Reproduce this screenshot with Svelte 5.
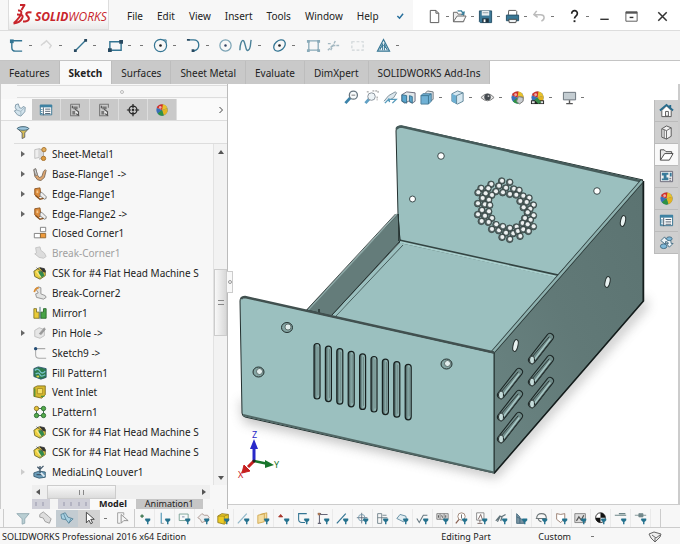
<script>
	const menus = ['File', 'Edit', 'View', 'Insert', 'Tools', 'Window', 'Help'];

	const quick = [
		{ icon: 'new', label: 'New', drop: true },
		{ icon: 'open', label: 'Open', drop: true },
		{ icon: 'save', label: 'Save', drop: true },
		{ icon: 'print', label: 'Print', drop: true },
		{ icon: 'undo', label: 'Undo', drop: true },
		{ icon: 'help', label: 'Help', drop: true },
		{ icon: 'minimize', label: 'Minimize' },
		{ icon: 'restore', label: 'Restore' },
		{ icon: 'close', label: 'Close' }
	];

	const sketchTools = [
		{ icon: 'sketch', label: 'Sketch', drop: true },
		{ icon: 'dimension', label: 'Smart Dimension', drop: true },
		{ icon: 'line', label: 'Line', drop: true },
		{ icon: 'rect', label: 'Corner Rectangle', drop: true, extra: true },
		{ icon: 'circle', label: 'Circle', drop: true },
		{ icon: 'arc', label: 'Arc', drop: true },
		{ icon: 'circle3', label: 'Perimeter Circle' },
		{ icon: 'spline', label: 'Spline', drop: true },
		{ icon: 'ellipse', label: 'Ellipse', drop: true },
		{ icon: 'convert', label: 'Convert Entities' },
		{ icon: 'trim', label: 'Trim Entities' },
		{ icon: 'offset', label: 'Offset Entities' },
		{ icon: 'mirrorTool', label: 'Mirror Entities', drop: true }
	];

	const tabs = ['Features', 'Sketch', 'Surfaces', 'Sheet Metal', 'Evaluate', 'DimXpert', 'SOLIDWORKS Add-Ins'];

	const panelTabs = [
		{ icon: 'part', label: 'FeatureManager' },
		{ icon: 'props', label: 'PropertyManager' },
		{ icon: 'config', label: 'ConfigurationManager' },
		{ icon: 'config', label: 'Display States' },
		{ icon: 'target', label: 'DimXpertManager' },
		{ icon: 'ball', label: 'DisplayManager' }
	];

	const tree = [
		{ name: 'Sheet-Metal1', icon: 'sheetMetal', open: true },
		{ name: 'Base-Flange1 ->', icon: 'baseFlange', open: true },
		{ name: 'Edge-Flange1', icon: 'edgeFlange', open: true },
		{ name: 'Edge-Flange2 ->', icon: 'edgeFlange', open: true },
		{ name: 'Closed Corner1', icon: 'closedCorner' },
		{ name: 'Break-Corner1', icon: 'suppressed', off: true },
		{ name: 'CSK for #4 Flat Head Machine S', icon: 'csk' },
		{ name: 'Break-Corner2', icon: 'breakCorner' },
		{ name: 'Mirror1', icon: 'mirror' },
		{ name: 'Pin Hole ->', icon: 'hole', open: true },
		{ name: 'Sketch9 ->', icon: 'sketchItem' },
		{ name: 'Fill Pattern1', icon: 'fill' },
		{ name: 'Vent Inlet', icon: 'vent' },
		{ name: 'LPattern1', icon: 'lpattern' },
		{ name: 'CSK for #4 Flat Head Machine S', icon: 'csk' },
		{ name: 'CSK for #4 Flat Head Machine S', icon: 'csk' },
		{ name: 'MediaLinQ Louver1', icon: 'louver', open: true, faint: true }
	];

	const viewTools = [
		{ icon: 'zoomFit', label: 'Zoom to Fit' },
		{ icon: 'zoomArea', label: 'Zoom to Area' },
		{ icon: 'prevView', label: 'Previous View' },
		{ icon: 'section', label: 'Section View' },
		{ icon: 'orient', label: 'View Orientation', drop: true },
		{ icon: 'cube', label: 'Display Style', drop: true },
		{ icon: 'eye', label: 'Hide/Show Items', drop: true },
		{ icon: 'appearance', label: 'Edit Appearance' },
		{ icon: 'scene', label: 'Apply Scene', drop: true },
		{ icon: 'monitor', label: 'View Settings', drop: true }
	];

	const taskTabs = [
		{ icon: 'home', label: 'Resources' },
		{ icon: 'library', label: 'Design Library' },
		{ icon: 'folder', label: 'File Explorer' },
		{ icon: 'palette', label: 'View Palette' },
		{ icon: 'ball', label: 'Appearances' },
		{ icon: 'props', label: 'Custom Properties' },
		{ icon: 'forum', label: 'Forum' }
	];

	const filters = [
		'fVertex', 'fEdge', 'fFace', 'fSurface', 'fSolid', 'fAxis', 'fPlane', 'fPoint', 'fSketch',
		'fSegment', 'fLine', 'fCenter', 'fDim', 'fNote', 'fFinish', 'fBox', 'fBalloon', 'fDatum',
		'fWeld', 'fBlock', 'fCosmetic', 'fShield', 'fPicture', 'fMass', 'fRoute', 'fPipe'
	];

	// Vent perforations, drawn at a third of this scale
	const perforations = [
		[110, 33], [134, 37], [78, 43], [101, 48], [48, 55], [122, 54], [69, 56], [146, 57], [162, 61],
		[92, 65], [39, 68], [61, 71], [113, 68], [134, 73], [80, 76], [153, 75], [174, 78], [192, 84],
		[52, 85], [71, 90], [165, 94], [184, 97], [38, 101], [59, 104], [74, 106], [205, 105], [175, 113],
		[195, 117], [50, 121], [71, 125], [187, 128], [38, 134], [59, 138], [80, 145], [205, 137],
		[179, 145], [196, 150], [49, 154], [70, 157], [93, 164], [172, 160], [187, 164], [80, 178],
		[101, 182], [113, 170], [134, 175], [154, 171], [205, 170], [122, 189], [144, 191], [158, 184],
		[174, 179], [190, 184], [165, 199], [111, 202], [134, 208]
	];

	const slots = Array.from({ length: 9 }, (_, i) => ({ x: 314 + i * 11.4, y: 343.5 + i * 2.6 }));
	const louvers = [[501, 395], [501, 417], [501, 439], [532, 360], [532, 382], [532, 404]];

	const T = '<path d="M9 9h6M9 9l2.200 2.500M15 9l-2.200 2.500M12 9v6" stroke="#23718d" stroke-width="1.700"/>';
	const ball = '<circle cx="8" cy="8" r="6.500" fill="#3b6fb8"/><path d="M8 8L2 5.500A6.500 6.500 0 0 1 8 1.500z" fill="#dfe6ee"/><path d="M8 8L8 1.500A6.500 6.500 0 0 1 14.200 6z" fill="#e8c12c"/><path d="M8 8L2 5.500A6.500 6.500 0 0 1 9 1.600z" fill="#cf2e28"/><path d="M8 8l6.200-2A6.500 6.500 0 0 1 10 14.200z" fill="#e2b322"/><path d="M8 8l2 6.200A6.500 6.500 0 0 1 3 12z" fill="#2e9243"/><circle cx="6" cy="5" r="1.500" fill="#fff" opacity=".6"/>';
	const cubeBlue = '<path d="M2 4l6-3 6 2v9l-6 3-6-3z" fill="#d5e7f0" stroke="#5f8498"/><path d="M2 4l5 2v9l-5-3z" fill="#6db0d3"/><path d="M7 6l7-3M7 6v9" stroke="#5f8498"/>';

	const icons = {
		new: '<path d="M3.500 1.500h6l3 3v10h-9z" fill="#fff" stroke="#555"/><path d="M9.500 1.500v3h3" stroke="#555"/>',
		open: '<path d="M1.500 13.500v-10h4l1 2h6v8z" fill="#ececec" stroke="#666"/><path d="M1.500 13.500l4-6h9.500l-3 6z" fill="#f8f8f8" stroke="#666"/><path d="M6 2h4l2 3M10 6l2.500-.5.5-3" stroke="#397f9b" stroke-width="1.500"/>',
		save: '<path d="M1.500 2h13v12.500h-12l-1-1z" fill="#3c7897" stroke="#244f66"/><path d="M4 2h8v5H4z" fill="#e9eef1"/><path d="M4.500 10h7v4.500h-7z" fill="#20323d"/><path d="M6 11h2v3H6z" fill="#fff"/><path d="M5 4h6" stroke="#8c9aa2"/>',
		print: '<path d="M4 1.500h7.500l1 1V7h-9z" fill="#fff" stroke="#555"/><path d="M1.500 6.500h13v6h-13z" fill="#397895" stroke="#244f66"/><path d="M4 11h8.500l-1 3.500h-7z" fill="#eef2f4" stroke="#444"/>',
		undo: '<path d="M5 2L2 6l4 3M2.500 6H9c5 0 5 5 1 7" stroke="#bcbcbc" stroke-width="1.600"/>',
		help: '<path d="M5 5c0-4.500 6.500-4 6 0 0 2.500-3 2.500-3 5" stroke="#222" stroke-width="1.800"/><path d="M7 12h2v2H7z" fill="#222"/>',
		minimize: '<path d="M3.500 11h9" stroke="#333" stroke-width="1.500"/>',
		restore: '<path d="M2 3h12v10H2z" fill="#fff" stroke="#555"/><path d="M2 4h12" stroke="#555" stroke-width="2"/><path d="M6 9h4" stroke="#333" stroke-width="1.500"/>',
		close: '<path d="M3.500 3.500l9 9m0-9l-9 9" stroke="#333" stroke-width="1.600"/>',
		check: '<path d="M5 8l2.500 2.500 4-5" stroke="#276f9c" stroke-width="1.700"/>',

		sketch: '<path d="M3 3h11M3 3v7q0 4 4 4h7" stroke="#347593" stroke-width="1.500"/><path d="M1 1.500h4v4H1z" fill="#347593"/>',
		dimension: '<path d="M2 8l6-5 5 5-2 3M8 3L5 6" stroke="#d5d5d5" stroke-width="1.500"/>',
		line: '<path d="M3 13L13 3" stroke="#347593" stroke-width="1.400"/><path d="M1 12h3v3H1zM12 1h3v3h-3z" fill="#284960"/>',
		rect: '<path d="M2 4h12v9H2z" stroke="#347593" stroke-width="1.500"/><path d="M0 11h4v4H0zM12 2h4v4h-4z" fill="#284960"/>',
		circle: '<circle cx="8" cy="8" r="6.500" stroke="#347593" stroke-width="1.300"/><circle cx="8" cy="8" r="1.400" fill="#222"/><path d="M11 2h3v3" stroke="#347593"/>',
		arc: '<path d="M3 2h5c7 0 8 10 0 12" stroke="#347593" stroke-width="1.400"/><path d="M1 1h3v2H1zM6 12h3v3H6z" fill="#284960"/>',
		circle3: '<circle cx="8" cy="8" r="6" stroke="#7ba3b5" stroke-width="1.300"/><circle cx="8" cy="8" r="1.300" fill="#346"/>',
		spline: '<path d="M2 13C2 7 4 1 6 3s2 12 5 10 2-7 3-11" stroke="#4a8098" stroke-width="1.500"/>',
		ellipse: '<ellipse cx="8" cy="8" rx="7" ry="5" transform="rotate(-42 8 8)" stroke="#347593" stroke-width="1.400"/><circle cx="8" cy="8" r="1.400" fill="#222"/>',
		convert: '<path d="M3 3h10v10H3z" stroke="#8aabb9" stroke-width="1.400"/><path d="M1 2h3v3H1zM12 2h3v3h-3zM1 12h3v3H1zM12 12h3v3h-3z" fill="#8aabb9"/>',
		trim: '<path d="M2 13l5-5M5 13l5-10M7 8h7M2 6h4" stroke="#a4b8c1" stroke-width="1.500" stroke-dasharray="3 1"/>',
		offset: '<path d="M2 4h12v9H2z" stroke="#cfd5d8" stroke-width="1.300" stroke-dasharray="3 2"/>',
		mirrorTool: '<path d="M8 1.500L1.500 14h13z" fill="#eaf3f7" stroke="#347593" stroke-width="1.200"/><path d="M4 13l3-7v7M12 13L9 6v7M4 11l4-3 4 4" stroke="#347593"/>',

		part: '<path d="M3 2l3-1 1.500 4.500L10 6l1.500-2L14 5l-.5 5-4.500 5L5 13.500 1.500 9 4 8 2.500 5z" fill="#d3e4ed" stroke="#7b95a5"/><path d="M4 8l5 1.500 4-4M9 9.500v5" stroke="#9bb2bf"/>',
		props: '<path d="M1.500 2.500h13v11h-13z" fill="#fff" stroke="#316f8e"/><path d="M1 2h14v3H1z" fill="#3e82a3"/><path d="M5 5v9M7 7h6M7 9.500h6M7 12h6" stroke="#456"/><path d="M3 7v1M3 9v1M3 11.500v1" stroke="#3e82a3" stroke-width="2"/>',
		config: '<path d="M3 1.500h10v4M3 1.500v13h10" stroke="#777" stroke-width="1.200"/><path d="M6 4h5v3H6zM5 9h3v4H5z" fill="#777"/><path d="M8 7l4 3v4l-3-2M5 3v3" stroke="#555" stroke-width="1.300"/><path d="M9 10l2 2" stroke="#eee" stroke-width="1.500"/>',
		target: '<circle cx="8" cy="8" r="4.500" stroke="#222" stroke-width="1.400"/><path d="M8 1v5M8 10v5M1 8h5M10 8h5" stroke="#222" stroke-width="1.400"/><circle cx="8" cy="8" r="1.300" fill="#222"/>',
		ball,
		funnel: '<path d="M1.500 4q6.500-4 13 0L10 9v5l-3 1.500V9z" fill="#d8bd54" stroke="#5e6066"/><ellipse cx="8" cy="4" rx="6.500" ry="2" fill="#9fc7de" stroke="#44697d"/>',

		sheetMetal: '<path d="M2 3l5-1v10l-5 1z" fill="#eee" stroke="#bbb"/><path d="M7 2l5 2v8l-5 2" fill="#d9d9d9" stroke="#aaa"/><circle cx="12.500" cy="3" r="2.500" fill="#e1ad5c" stroke="#a46e28"/><circle cx="12" cy="13" r="2.500" fill="#dd9b3d" stroke="#a46e28"/>',
		baseFlange: '<path d="M1 3l2-1 2 7 2 3 3-1 2-6 2-2 1 1-2 8-4 3.500-4-1-3-4z" fill="#dda56f" stroke="#7b6957"/><path d="M1 3l2-1 2 7-2 1z" fill="#ddd" stroke="#777"/>',
		edgeFlange: '<path d="M2 2l6-1 1 9-3 2-4-3z" fill="#dc8c3c" stroke="#88501c"/><path d="M8 7l2-1 5 5v2l-2 1-5-4z" fill="#eee" stroke="#777"/><path d="M3 10l5 4 4-1" stroke="#88501c" stroke-width="1.500"/><path d="M4 4h2v3H4z" fill="#f4c58b"/>',
		closedCorner: '<path d="M8.500 1.500h6v5h-6zM1.500 8.500h7v5h-7z" fill="#fff" stroke="#777"/><path d="M8.500 8.500h6v5h-6z" fill="#ef9b3d" stroke="#90632c"/>',
		suppressed: '<path d="M3 2l5-1 1 4 4 3 2 4-3 2-5-1-5-4 2-1z" fill="#dcdcdc" stroke="#c1c1c1"/>',
		breakCorner: '<path d="M3 3l3-2 3 1v7l5 2 1 2-3 2-8-2-1-4 3-1z" fill="#e2e3e2" stroke="#8e8e8e"/><path d="M1.500 7q1-5 5-5" stroke="#d98d35" stroke-width="2"/>',
		csk: '<path d="M1 6l6-4 7 3v6l-6 4-6-3z" fill="#edcf3e" stroke="#66642b"/><path d="M6 6l5 0 2 5-5 3z" fill="#318a4d"/><path d="M4 6l5 7" stroke="#f8e88b" stroke-width="1.500"/><path d="M8 2l5 1 1 4-3-1z" fill="#333" stroke="#333"/><path d="M4 2l8 6" stroke="#555"/>',
		mirror: '<path d="M1 3h3v4h3v7H1z" fill="#eacb37" stroke="#7f762d"/><path d="M15 3h-3v4H9v7h6z" fill="#48a447" stroke="#28672b"/><path d="M8 1v14" stroke="#396675"/>',
		hole: '<path d="M2 5l5-3 6 2v7l-5 3-6-2z" fill="#e6e6e6" stroke="#bcbcbc"/><path d="M7 9l6-7 1 2-5 6" fill="#999" stroke="#999"/>',
		sketchItem: '<path d="M3 3h11M3 3v7q0 4 4 4h8" stroke="#aaa" stroke-width="1.200"/><circle cx="3" cy="3" r="1.900" fill="#244d75"/>',
		fill: '<path d="M1 3l5-2 9 2v10l-6 2-8-3z" fill="#2d7b4c" stroke="#28536d"/><path d="M2 5q4-3 6 1t6 0M3 9q4-2 5 1t6 0" stroke="#79c2cc" stroke-width="1.500"/><path d="M4 12h3" stroke="#e1d34a" stroke-width="2"/>',
		vent: '<path d="M1 3l4-2h9v10l-4 4-9-2z" fill="#d7b92e" stroke="#7e6d1c"/><path d="M5 4h6v6H5z" fill="#f3df67" stroke="#a58c26"/><path d="M2 4v9M9 13h4" stroke="#4c923e" stroke-width="1.500"/>',
		lpattern: '<path d="M4 4h8v8H4z" stroke="#315f48"/><circle cx="4" cy="4" r="2.500" fill="#e5c338" stroke="#88702c"/><circle cx="12" cy="4" r="2.500" fill="#56ab4a" stroke="#2b6c34"/><circle cx="4" cy="12" r="2.500" fill="#56ab4a" stroke="#2b6c34"/><circle cx="12" cy="12" r="2.500" fill="#56ab4a" stroke="#2b6c34"/>',
		louver: '<path d="M1 9l6-2 7 1v6l-7 1-6-2z" fill="#6b9db9" stroke="#35586f"/><path d="M8 9V1m-3 1l3 3 4-4M4 11h8" stroke="#40576a" stroke-width="1.500"/><path d="M9 9l4 4" stroke="#e3eef5" stroke-width="2"/>',

		zoomFit: '<path d="M1.500 14L7 8" stroke="#3b83aa" stroke-width="3"/><circle cx="10" cy="5.500" r="4.300" fill="#f8fbfc" stroke="#677680" stroke-width="1.400"/><path d="M8 5.500h4" stroke="#777"/>',
		zoomArea: '<path d="M1.500 14L6 9" stroke="#60a0c4" stroke-width="3"/><circle cx="8" cy="7" r="4" fill="#eef4f7" stroke="#879099"/><path d="M3 2h3M9 1h6v3M14 7v4" stroke="#888" stroke-dasharray="2 1"/>',
		prevView: '<path d="M1 12l5-6 7-4 1.500 1-3 5-5 3" fill="#dbe6ec" stroke="#7d8f9a"/><path d="M2 14l4-4h8l-4 4M6 9l1 4" stroke="#569bbc" stroke-width="1.500"/>',
		section: '<path d="M1 5l5-3 9 1v9l-3 2-4-2-4 2-3-2z" fill="#e2e8eb" stroke="#667"/><path d="M1 5l5 1v8l-5-2zM9 6l3 1v7l-3-2z" fill="#5aa6cf" stroke="#376f8c"/>',
		orient: '<path d="M5 4l3-3 6 1v8l-3 2" fill="#e5e9ed" stroke="#6b7278"/><path d="M1 6l2-2h9v8l-3 3H1z" fill="#70b1d5" stroke="#4c7d99"/><path d="M1 6h8l3-2M9 6v9" stroke="#3c7592"/>',
		cube: cubeBlue,
		eye: '<path d="M1 8q7-8 14 0-7 7-14 0z" fill="#e8e8e8" stroke="#777"/><circle cx="8" cy="7.500" r="3.500" fill="#454b50"/><circle cx="9" cy="6.500" r="1" fill="#ccc"/>',
		appearance: ball + '<path d="M9 7l5 1v4l-4 3-3-3z" fill="#c8ccd0" stroke="#777"/>',
		scene: ball + '<path d="M1 11h14v4H1z" fill="#222"/><path d="M2 12h3v2H2zM11 12h3v2h-3z" fill="#e5e5e5"/><path d="M5 11l4-2 3 4-3 2z" fill="#398b4a"/>',
		monitor: '<path d="M1.500 2.500h13v8h-13z" fill="#c4cdd2" stroke="#66717a"/><path d="M8 11v3M4.500 14.500h7" stroke="#555" stroke-width="1.500"/>',

		home: '<path d="M3 8v6.500h10V8L8 3z" fill="#fff" stroke="#555"/><path d="M1 8l7-6 7 6M12 2v4" stroke="#286c8d" stroke-width="2"/><path d="M7 9h3v5H7z" stroke="#555"/>',
		library: '<path d="M3 4l5-3 5 2v9l-5 3-5-2z" fill="#f1f1f1" stroke="#555"/><path d="M3 4l5 2 5-3M8 6v9M5.500 5v9" stroke="#666"/>',
		folder: '<path d="M1.500 14V3h4l2 2h6v3" fill="#e8e8e8" stroke="#444"/><path d="M1.500 14L6 7h9l-4 7z" fill="#fff" stroke="#444"/>',
		palette: '<path d="M1.500 2.500h13v11h-13z" fill="#eee" stroke="#667"/><path d="M3 4h7v2H8v3h2v3H3v-2h2V7H3z" fill="#37799a"/><path d="M12.500 4v4" stroke="#37799a" stroke-width="2"/><path d="M11 10h2M11 12h2" stroke="#667"/>',
		forum: '<path d="M2 6l4-4 1 2q6-1 6 5h2l-4 4-3-4h2q0-2-3-2v3z" fill="#eef5f8" stroke="#446d84"/><ellipse cx="11" cy="4" rx="3" ry="2" fill="#80bada" stroke="#446d84"/><ellipse cx="5" cy="12" rx="3.500" ry="2.500" fill="#80bada" stroke="#446d84"/>',

		selFilter: '<path d="M1 3h14l-5 6v5l-3 1V9z" fill="#b9ced3" stroke="#91a9b1"/>',
		clearFilter: '<path d="M2 4l4-3 6 5 3 3-2 5-5-2-2-4-4-1z" fill="#ddd" stroke="#999"/>',
		allFilter: '<path d="M1 4l5-2 3 5 6 2-5 5-3-4-5-1z" fill="#a9d1e3" stroke="#59869c"/><path d="M4 3l3 7M13 8l-3 6" stroke="#59869c"/>',
		cursor: '<path d="M5 1.500v12l3-3 2 4 2-1-2-4h4z" fill="#fff" stroke="#333"/>',
		cursorBox: '<path d="M3 2h7v3M3 2v12h3" stroke="#999"/><path d="M7 4v10l3-3h5z" fill="#f4f4f4" stroke="#888"/>',

		fVertex: '<path d="M5 3v4M3 5h4" stroke="#4a7e5b" stroke-width="2"/>' + T,
		fEdge: '<path d="M4 1v13" stroke="#5b9cba" stroke-width="1.500"/><path d="M4 14h3" stroke="#888"/>' + T,
		fFace: '<path d="M1.500 2.500h11v8h-11z" fill="#f7f9f9" stroke="#6b9689"/><path d="M5 6h3" stroke="#679"/>' + T,
		fSurface: '<path d="M1 7l5-5 3 2 4 0 2 3-4 4-5 2-2-4z" fill="#eee" stroke="#a28d85"/>' + T,
		fSolid: '<path d="M1 5l5-3 8 1v8l-5 4-8-2z" fill="#eccb25" stroke="#8c7619"/><path d="M1 5h8l5-2M9 5v9" stroke="#9e861f"/>' + T,
		fAxis: '<path d="M1 14L12 2" stroke="#92b8c9" stroke-width="1.500"/>' + T,
		fPlane: '<path d="M1 4l8-2v10l-8 2zM4 3l8-2v9" fill="#f4dda1" stroke="#cda144"/>' + T,
		fPoint: '<path d="M2 6l2.500-3L7 6z" fill="#a7352a" stroke="#a7352a"/>' + T,
		fSketch: '<path d="M12 2H2v7q0 4 4 4h4" stroke="#347593" stroke-width="1.300"/>' + T,
		fSegment: '<path d="M3 14V3h10M1 2h4M1 14h4" stroke="#667" stroke-width="1.300"/><path d="M1 1h3v3H1z" fill="#a75"/>' + T,
		fLine: '<path d="M1 14L12 2" stroke="#347593" stroke-width="1.500"/>' + T,
		fCenter: '<path d="M7 1v13M1 7h13" stroke="#567"/><circle cx="7" cy="7" r="4" stroke="#6c94a7"/>' + T,
		fDim: '<path d="M2 2v12M2 2h5v12H2M2 7h12M8 4h5" stroke="#657780"/>' + T,
		fNote: '<path d="M1 8l4-5 7 2 1 4-4 3z" fill="#e1edf2" stroke="#4f7e95"/>' + T,
		fFinish: '<path d="M1 8l3 5 5-9h5" stroke="#657780" stroke-width="1.300"/>' + T,
		fBox: '<path d="M1 2h14v7H1zM5 2v7M10 2v7" fill="#ddd" stroke="#777"/><path d="M3 4v3M7 4l1 3M12 4v3" stroke="#333"/>' + T,
		fBalloon: '<path d="M1 14l4-5" stroke="#875f50" stroke-width="1.500"/><circle cx="8" cy="5.500" r="4.500" fill="#fff" stroke="#917565"/><path d="M8 3v5" stroke="#555"/>' + T,
		fDatum: '<path d="M2 1h9v9H2z" fill="#fff" stroke="#777"/><path d="M4 9l3-6 2 6M6 10v3M3 14h6" stroke="#664f4c"/>' + T,
		fWeld: '<path d="M1 11l5-6 2 1 5-3M3 12l3-6M7 11l2-6" stroke="#62747b" stroke-width="1.500"/>' + T,
		fBlock: '<path d="M2 14V2l4 4v8M2 6l9 4v4H2" fill="#7793a2" stroke="#42667b"/>' + T,
		fCosmetic: '<path d="M2 8q0-6 6-6t6 6M1 8h13M4 8q0 3 4 4" stroke="#6e7779" stroke-width="1.300"/>' + T,
		fShield: '<path d="M2 2l5 1 5-1v6l-5 5-5-4z" fill="#fff" stroke="#8d6c5d"/>' + T,
		fPicture: '<path d="M1 2h13v11H1z" fill="#ddd" stroke="#777"/><path d="M3 11l3-5 3 4 3-6" stroke="#555" stroke-width="1.500"/>' + T,
		fMass: '<circle cx="8" cy="7" r="6" fill="#fff" stroke="#111"/><path d="M8 1a6 6 0 0 1 6 6H8zM8 7v6a6 6 0 0 1-6-6z" fill="#111"/>' + T,
		fRoute: '<path d="M1 4h14M6 2h8" stroke="#6c8587" stroke-width="1.300"/>' + T,
		fPipe: '<path d="M1 4h14M6 2h5v4H6z" fill="#7a8c90" stroke="#6c8587"/>' + T
	};

	let activeTab = $state('Sketch');
</script>

{#snippet glyph(name)}
	<svg class="glyph" viewBox="0 0 16 16" fill="none" aria-hidden="true">{@html icons[name]}</svg>
{/snippet}

{#snippet tool(item)}
	<div class="tool">
		<button aria-label={item.label}>{@render glyph(item.icon)}</button>
		{#if item.drop}<i class="dot"></i>{/if}
		{#if item.extra}<i class="dot"></i>{/if}
	</div>
{/snippet}

<div class="app">
	<!-- Title bar -->
	<header>
		<div class="logo">
			<svg class="mark" viewBox="0 0 20 21" fill="none" stroke="#c8242b" stroke-width="2" stroke-linejoin="round" aria-hidden="true">
				<path d="M7 1h4.500l-3 5" />
				<path d="M5 6.500c5-.5 5 4-4 12.500M4 10.500c4 0 7 .5 5 4C7.500 17.500 4 19 .5 19.500" />
				<path d="M18.500 8.500c-5-1-6.500 1-4 3.500s2 5.500-4.500 5.500" />
			</svg>
			<span><b>SOLID</b>WORKS</span>
		</div>
		<nav>
			{#each menus as menu}
				<button>{menu}</button>
			{/each}
			<button class="pin" aria-label="Pin menu">{@render glyph('check')}</button>
		</nav>
		<div class="quick">
			{#each quick as item}
				{@render tool(item)}
			{/each}
		</div>
	</header>

	<div class="sketchbar">
		{#each sketchTools as item}
			{@render tool(item)}
		{/each}
	</div>

	<div class="tabs">
		{#each tabs as tab}
			<button class:active={tab === activeTab} onclick={() => (activeTab = tab)}>{tab}</button>
		{/each}
	</div>

	<main>
		<!-- Feature tree -->
		<aside>
			<div class="grip"><i></i></div>
			<div class="panel-tabs">
				{#each panelTabs as tab, i}
					<button class:active={i === 0} aria-label={tab.label}>{@render glyph(tab.icon)}</button>
				{/each}
				<button class="more" aria-label="More tabs">
					<svg viewBox="0 0 6 8" fill="none" stroke="#444"><path d="M1.500 1l3 3-3 3" /></svg>
				</button>
			</div>
			<div class="filter">{@render glyph('funnel')}</div>

			<div class="tree-area">
				<ul>
					{#each tree as node}
						<li class:off={node.off}>
							<span class="arrow" class:faint={node.faint}>
								{#if node.open}
									<svg viewBox="0 0 4 6"><path d="M0 0l4 3-4 3z" /></svg>
								{/if}
							</span>
							{@render glyph(node.icon)}
							<span class="name">{node.name}</span>
						</li>
					{/each}
				</ul>
				<div class="vscroll">
					<svg viewBox="0 0 6 4"><path d="M0 4l3-4 3 4z" /></svg>
					<div class="vtrack"><div class="thumb"><i></i></div></div>
					<svg viewBox="0 0 6 4"><path d="M0 0l3 4 3-4z" /></svg>
				</div>
			</div>

			<div class="hscroll">
				<svg viewBox="0 0 4 6"><path d="M4 0L0 3l4 3z" /></svg>
				<div class="htrack"><div class="thumb"><i></i></div></div>
				<svg viewBox="0 0 4 6"><path d="M0 0l4 3-4 3z" /></svg>
			</div>
			<div class="doc-tabs">
				<div class="doc-nav"><i></i><i></i><b></b><i></i><i></i><i></i><i></i></div>
				<button class="active">Model</button>
				<button>Animation1</button>
			</div>
			<button class="collapse" aria-label="Collapse panel"><i></i></button>
		</aside>

		<!-- Graphics area -->
		<section>
			<svg class="scene" viewBox="228 84 450 420" role="img" aria-label="Sheet metal enclosure">
				<defs>
					<filter id="soft" x="-20%" y="-20%" width="140%" height="140%"><feGaussianBlur stdDeviation="6" /></filter>
					<linearGradient id="side" x1="0" y1="1" x2="1" y2="0">
						<stop offset="0" stop-color="#6b8583" />
						<stop offset=".5" stop-color="#617977" />
						<stop offset="1" stop-color="#5b7371" />
					</linearGradient>
					<linearGradient id="slot"><stop offset="0" stop-color="#3c504f" /><stop offset=".5" stop-color="#8badab" /><stop offset="1" stop-color="#9bbdbb" /></linearGradient>
				</defs>

				<path d="M240 400L494 466 644 296 648 306 496 478 244 422z" fill="#777" opacity=".45" filter="url(#soft)" />

				<g stroke="#23302f" stroke-linejoin="round">
					<!-- rear plate and floor -->
					<path d="M396 131q0-5 5-5L643 180 557 276 400 242 398 214z" fill="#9bc0bf" />
					<path d="M396.500 129q1-2.500 5-2.500L642 181.500" fill="none" stroke="#465c5b" stroke-width="2.500" />
					<path d="M400 242L558 276 493 353 331 316z" fill="#9bc0bf" stroke-width=".8" />
					<path d="M399 241L558 276" fill="none" stroke="#334442" stroke-width="3.500" />
					<path d="M400 242L558 277" fill="none" stroke="#a9cfcd" stroke-width="2" />
					<path d="M403 245L335 317M558 279L494 352" fill="none" stroke-width=".7" />
					<!-- left wall -->
					<path d="M398 214l2 27-69 75-24-6z" fill="#647c7a" stroke-width="1" />
					<path d="M397 214l-89 96" fill="none" stroke="#8eaaa8" stroke-width="1.500" />
					<path d="M395.500 214l-89 96M398.500 214v27" fill="none" stroke-width=".8" />
					<path d="M402 243L334 316" fill="none" stroke="#9bc0bf" stroke-width="2" />
					<path d="M319 309v4" fill="none" stroke-width="1.500" />
					<!-- right side -->
					<path d="M494 353L643 182V301L494 473z" fill="url(#side)" />
					<path d="M492 353L642 181" fill="none" stroke="#2c3b3a" stroke-width="4" />
					<path d="M492 353L642 181" fill="none" stroke="#8fb2b0" stroke-width="2.500" />
					<path d="M643.500 181V301L494 473.500" fill="none" stroke="#141d1c" stroke-width="1.500" />
					<!-- front plate -->
					<path d="M240 301q0-4 5-4L494 353V473L245 417q-3-1-3-4z" fill="#9bc0bf" />
					<path d="M241 299q1-2 4-2L494 352.500" fill="none" stroke="#41504f" stroke-width="2.500" />
					<path d="M243 415L494 472.500" fill="none" stroke="#506664" stroke-width="2" />
				</g>

				<g fill="#fff" stroke="#39494a">
					<circle cx="441" cy="156" r="3.300" />
					<circle cx="412.500" cy="199" r="3" />
					<circle cx="597" cy="191" r="3.300" />
				</g>
				<g fill="#e9f2f1" stroke="#26302f">
					<ellipse cx="623" cy="221" rx="2.400" ry="5.500" transform="rotate(13 623 221)" />
					<ellipse cx="607.500" cy="282" rx="2.400" ry="5.500" transform="rotate(13 607.500 282)" />
					<ellipse cx="515.500" cy="345.500" rx="2.400" ry="6" transform="rotate(13 515.500 345.500)" />
				</g>

				{#each [[287, 327.500], [258.500, 372], [446.500, 364]] as [x, y]}
					<ellipse cx={x} cy={y} rx="5.500" ry="5" fill="#84a5a3" stroke="#24302f" />
					<circle cx={x + 1} cy={y - 0.5} r="3" fill="#e2eeed" stroke="#3c4c4b" stroke-width=".7" />
				{/each}

				<g transform="translate(465 170) scale(.3333)">
					{#each perforations as [x, y]}
						<circle cx={x} cy={y} r="10" fill="#5b6b6b" stroke="#2c3635" stroke-width="2" />
						<circle cx={x + 1} cy={y - 1} r="6" fill="#eef1f1" />
					{/each}
				</g>

				{#each slots as slot}
					<rect x={slot.x} y={slot.y} width="6" height="55.500" rx="3" fill="url(#slot)" stroke="#182120" stroke-width="1.200" />
					<path d="M{slot.x + 4} {slot.y + 3}v49" stroke="#5c7573" stroke-width=".7" />
				{/each}

				{#each louvers as [x, y]}
					<g fill="none" stroke-linecap="round">
						<path d="M{x} {y}l18-23" stroke="#1c2625" stroke-width="8" />
						<path d="M{x} {y}l18-23" stroke="#6d8886" stroke-width="6" />
						<path d="M{x + 2} {y}l16-21" stroke="#a8c7c5" stroke-width="1.500" />
						<path d="M{x} {y - 3}l17-20M{x + 3} {y + 2}l16-21" stroke="#2c3837" stroke-width="1" />
						<ellipse cx={x} cy={y} rx="2.500" ry="4" fill="#c5dcda" stroke="#26302f" />
					</g>
				{/each}

				<!-- triad -->
				<g class="triad">
					<path d="M254 461V446" stroke="#2929c9" stroke-width="3" />
					<path d="M250 449l4-10 4 10z" fill="#2929c9" />
					<path d="M254 461l12 2.500" stroke="#17752b" stroke-width="2.500" />
					<path d="M265 460l9 5-9 3z" fill="#17752b" />
					<path d="M254 461l-6 6" stroke="#c62020" stroke-width="3" />
					<path d="M242 473l2-8 6 6z" fill="#c62020" stroke="#c62020" />
					<circle cx="254" cy="461" r="1.500" fill="#222" />
					<text x="252" y="438" fill="#2929c9">Z</text>
					<text x="274" y="468" fill="#17752b">Y</text>
					<text x="238" y="478" fill="#c62020">X</text>
				</g>
			</svg>

			<div class="view-tools">
				{#each viewTools as item}
					{@render tool(item)}
				{/each}
			</div>

			<div class="task-pane">
				{#each taskTabs as tab}
					<button class:active={tab.icon === 'folder'} aria-label={tab.label}>{@render glyph(tab.icon)}</button>
				{/each}
			</div>
		</section>
	</main>

	<!-- Selection filters -->
	<div class="filterbar">
		<div class="select-tools">
			<button aria-label="Toggle filters">{@render glyph('selFilter')}</button>
			<button aria-label="Clear filters">{@render glyph('clearFilter')}</button>
			<button class="pressed" aria-label="All filters">{@render glyph('allFilter')}</button>
			<button class="held" aria-label="Select">{@render glyph('cursor')}</button>
			<i class="dot"></i>
			<button aria-label="Select other">{@render glyph('cursorBox')}</button>
		</div>
		<div class="filters">
			{#each filters as name}
				<button aria-label={name}>{@render glyph(name)}</button>
			{/each}
		</div>
	</div>

	<footer>
		<span class="edition">SOLIDWORKS Professional 2016 x64 Edition</span>
		<span class="mode">Editing Part</span>
		<button class="units">Custom<i class="dot"></i></button>
		<svg class="tag" viewBox="0 0 14 12" fill="#eee" stroke="#666" aria-hidden="true">
			<path d="M1 3l5-2 7 2-1 3-5 5-4-4z" /><path d="M4 4l4 3 4-3M7 7v4" fill="none" />
		</svg>
	</footer>
</div>

<style>
	:global(body) {
		margin: 0;
	}

	.app {
		display: flex;
		flex-direction: column;
		min-height: 100vh;
		background: #f7f7f7;
		color: #222;
		font-family: 'Noto Sans', 'Open Sans', sans-serif;
		font-size: 10px;
		line-height: 16px;
	}

	button {
		display: flex;
		align-items: center;
		justify-content: center;
		padding: 0;
		border: 0;
		background: none;
		color: inherit;
		font: inherit;
		white-space: nowrap;
	}

	.glyph {
		display: block;
		flex: none;
		width: 14px;
		height: 14px;
	}

	.tool {
		display: flex;
		align-items: center;
	}

	.dot {
		flex: none;
		width: 3px;
		height: 1px;
		background: #777;
	}

	/* Title bar */
	header {
		display: flex;
		height: 30px;
		border-bottom: 1px solid #ddd;
	}

	.logo {
		display: flex;
		align-items: center;
		box-sizing: border-box;
		width: 101px;
		margin-left: 8px;
		padding-left: 4px;
		border: 1px solid #ddd;
		border-top: 0;
		background: linear-gradient(#fff 50%, #eaeaea);
		color: #c8242b;
		font-family: 'Open Sans', 'Noto Sans', sans-serif;
		font-size: 12px;
		font-style: italic;
	}

	.logo span {
		padding-top: 5px;
	}

	.mark {
		flex: none;
		width: 20px;
		height: 21px;
		margin-right: 2px;
	}

	nav {
		display: flex;
		align-items: center;
		gap: 14px;
		width: 304px;
		padding: 2px 9px 0 18px;
		box-sizing: border-box;
	}

	.pin {
		margin-left: auto;
	}

	.quick {
		display: grid;
		grid-template-columns: 25px 26px 27px 27px 35px 30px 27px 31px 16px;
		flex: 1;
		padding: 2px 0 0 13px;
		background: #fff;
	}

	.quick button {
		width: 16px;
	}

	.quick .glyph,
	.sketchbar .glyph,
	.task-pane .glyph,
	.view-tools .glyph {
		width: 15px;
		height: 15px;
	}

	.quick .dot,
	.sketchbar .dot {
		margin-left: 4px;
	}

	/* Sketch toolbar */
	.sketchbar {
		display: grid;
		grid-template-columns: 30px 34px 35px 45px 33px 32px 20px 34px 34px 20px 24px 26px 34px;
		height: 29px;
		padding-left: 7px;
		border-bottom: 1px solid #c4c4c4;
	}

	.sketchbar button {
		width: 18px;
	}

	.sketchbar .dot + .dot {
		margin-left: 9px;
	}

	/* Command tabs */
	.tabs {
		display: flex;
		height: 23px;
		background: #fff;
	}

	.tabs button {
		padding: 0 9px;
		border-right: 1px solid #bdbdbd;
		background: #c9c9c9;
	}

	.tabs button.active {
		background: #f9f9f9;
		font-weight: bold;
	}

	main {
		display: flex;
		flex: 1;
	}

	/* Feature tree */
	aside {
		position: relative;
		display: flex;
		flex-direction: column;
		box-sizing: border-box;
		width: 228px;
		border-left: 1px solid #ccc;
		border-right: 1px solid #bbb;
	}

	.grip {
		display: flex;
		align-items: center;
		justify-content: center;
		height: 11px;
		margin: 1px 0 1px 16px;
		border-top: 1px solid #ddd;
		border-bottom: 1px solid #ddd;
	}

	.grip i {
		width: 2px;
		height: 2px;
		border: 1px solid #bbb;
		border-radius: 50%;
	}

	.panel-tabs {
		display: flex;
		height: 21px;
		padding-left: 6px;
		border-bottom: 1px solid #ddd;
		background: #fafafa;
	}

	.panel-tabs button {
		width: 29px;
		border-right: 1px solid #ddd;
		box-sizing: border-box;
		background: #c9c9c9;
	}

	.panel-tabs button.active {
		width: 25px;
		border: 0;
		background: #fafafa;
	}

	.panel-tabs .more {
		width: 12px;
		margin-left: auto;
		border: 0;
		background: none;
	}

	.more svg {
		width: 6px;
		height: 8px;
	}

	.filter {
		display: flex;
		align-items: center;
		height: 22px;
		margin-left: 13px;
		padding-left: 2px;
		border-bottom: 1px solid #ddd;
	}

	.tree-area {
		display: flex;
		flex: 1;
	}

	ul {
		display: flex;
		flex: 1;
		flex-direction: column;
		margin: 0;
		padding: 0 0 3px 18px;
		list-style: none;
	}

	li {
		display: flex;
		flex: 1;
		align-items: center;
	}

	.arrow {
		display: flex;
		width: 14px;
	}

	.arrow svg {
		width: 4px;
		height: 6px;
		margin-left: 2px;
		fill: #666;
	}

	.arrow.faint svg {
		fill: #ccc;
	}

	.name {
		width: 0;
		margin-left: 5px;
		white-space: nowrap;
	}

	.off {
		color: #a0a0a0;
	}

	.vscroll {
		display: flex;
		flex-direction: column;
		align-items: center;
		width: 13px;
		padding: 6px 0 5px;
		border-left: 1px solid #e2e2e2;
		background: #f2f2f2;
	}

	.vscroll svg {
		width: 6px;
		height: 4px;
		fill: #555;
	}

	.vtrack {
		display: grid;
		grid-template-rows: 36fr 21fr 44fr;
		flex: 1;
		align-self: stretch;
	}

	.thumb {
		display: flex;
		align-items: center;
		justify-content: center;
		border: 1px solid #ccc;
		background: linear-gradient(90deg, #f8f8f8, #d8d8d8);
	}

	.vtrack .thumb {
		grid-row: 2;
	}

	.vtrack i {
		width: 6px;
		height: 3px;
		border-top: 1px solid #888;
		border-bottom: 1px solid #888;
	}

	.hscroll {
		display: flex;
		align-items: center;
		height: 14px;
		margin: 0 17px 0 31px;
		padding: 0 4px;
		background: #efefef;
	}

	.hscroll svg {
		width: 4px;
		height: 6px;
		fill: #555;
	}

	.htrack {
		display: grid;
		grid-template-columns: 42fr 52fr;
		flex: 1;
		align-self: stretch;
		padding-left: 7px;
	}

	.htrack .thumb {
		background: linear-gradient(#f8f8f8, #dcdcdc);
	}

	.htrack i {
		width: 3px;
		height: 5px;
		border-right: 1px solid #888;
		border-left: 1px solid #888;
	}

	.doc-tabs {
		display: flex;
		height: 10px;
		padding-left: 31px;
		font-size: 9px;
	}

	.doc-tabs button {
		padding: 0 9px;
		background: #c6c6c6;
		line-height: 10px;
	}

	.doc-tabs button.active {
		background: #f9f9f9;
		font-weight: bold;
	}

	.doc-nav {
		display: flex;
		align-items: center;
		justify-content: space-around;
		width: 58px;
		background: #cfcfd8;
	}

	.doc-nav i {
		width: 2px;
		height: 4px;
		background: #b3b3c2;
	}

	.doc-nav b {
		align-self: stretch;
		width: 8px;
		background: #f4f4f4;
	}

	.collapse {
		position: absolute;
		z-index: 1;
		top: 187px;
		right: -6px;
		width: 7px;
		height: 22px;
		border: 1px solid #ccc;
		background: #f8f8f8;
	}

	.collapse i {
		width: 2px;
		height: 2px;
		border: 1px solid #999;
		border-radius: 50%;
	}

	/* Graphics area */
	section {
		position: relative;
		flex: 1;
		margin-bottom: 4px;
		border-right: 2px solid #ccc;
		border-bottom: 1px solid #ccc;
		background: #fff;
	}

	.scene {
		display: block;
		width: 100%;
		height: 100%;
	}

	.triad text {
		font-size: 9px;
	}

	.view-tools {
		position: absolute;
		top: 6px;
		left: 115px;
		display: grid;
		grid-template-columns: 20px 19px 18px 19px 30px 30px 30px 20px 32px 26px;
	}

	.view-tools button {
		width: 16px;
	}

	.view-tools .dot {
		margin-left: 4px;
	}

	.task-pane {
		position: absolute;
		top: 16px;
		right: 0;
		border-left: 1px solid #bbb;
	}

	.task-pane button {
		width: 23px;
		height: 22px;
		box-sizing: border-box;
		border-bottom: 1px solid #bbb;
		background: #cfcfcf;
	}

	.task-pane button.active {
		background: #f9f9f9;
	}

	/* Selection filters */
	.filterbar {
		display: flex;
		height: 18px;
		border-bottom: 1px solid #ccc;
	}

	.select-tools {
		display: flex;
		align-items: center;
		width: 122px;
		padding-left: 8px;
		margin-left: 3px;
		border-left: 1px solid #ccc;
		border-right: 1px solid #ccc;
	}

	.select-tools button {
		width: 22px;
		height: 17px;
	}

	.select-tools .pressed {
		background: #c3ccd2;
	}

	.select-tools .held {
		background: #d2d2d2;
	}

	.select-tools .dot {
		margin: 0 4px;
	}

	.filters {
		display: flex;
		flex: 1;
		margin-right: 19px;
		padding-right: 9px;
		border-right: 1px solid #ccc;
	}

	.filters button {
		flex: 1;
		box-sizing: border-box;
		border-right: 1px solid #eaeaea;
	}

	.filters .glyph {
		width: 13px;
		height: 13px;
	}

	/* Status bar */
	footer {
		display: flex;
		align-items: center;
		height: 17px;
		padding: 0 18px 0 2px;
		font-size: 9px;
	}

	.edition {
		flex: 1;
	}

	.mode {
		width: 97px;
	}

	.units {
		gap: 20px;
		margin-right: 54px;
	}

	.tag {
		width: 14px;
		height: 12px;
	}
</style>
